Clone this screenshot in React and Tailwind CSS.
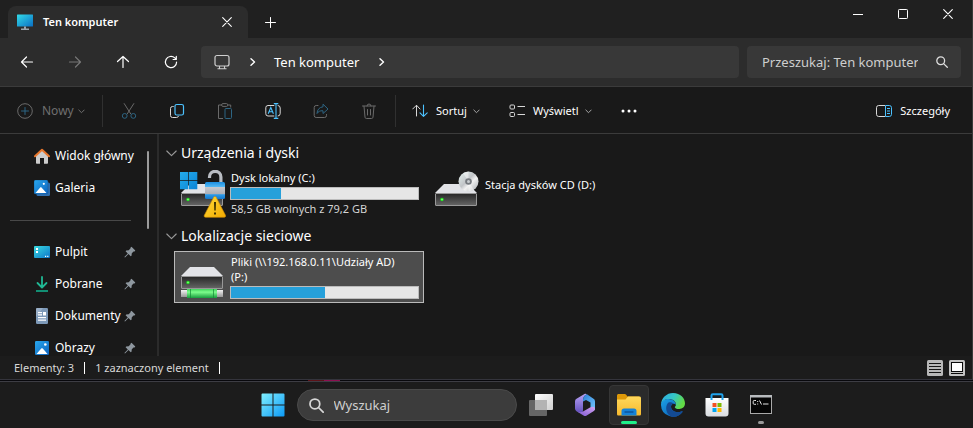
import React, { useId } from "react";

function Svg({ w = 16, h = w, box, children, ...rest }) {
  return (
    <svg width={w} height={h} viewBox={box || `0 0 ${w} ${h}`} fill="none" aria-hidden="true" className="block shrink-0" {...rest}>
      {children}
    </svg>
  );
}

const line = { stroke: "currentColor", strokeLinecap: "round", strokeLinejoin: "round" };

/* ---------- window and navigation glyphs ---------- */

const BackIcon = () => (
  <Svg w={14}><path {...line} strokeWidth="1.2" d="M12.5 7H1.5M6.5 2 1.5 7l5 5" /></Svg>
);
const ForwardIcon = () => (
  <Svg w={14}><path {...line} strokeWidth="1.2" d="M1.5 7h11M7.5 2l5 5-5 5" /></Svg>
);
const UpIcon = () => (
  <Svg w={14}><path {...line} strokeWidth="1.2" d="M7 12.5V1.5M1.5 6.5 7 1.5l5.500 5" /></Svg>
);
const RefreshIcon = () => (
  <Svg w={14}>
    <path {...line} strokeWidth="1.2" d="M12.600 7A5.600 5.600 0 1 1 10.800 2.900L12 4.200M12.300 1.300v3.200H9.100" />
  </Svg>
);
const CrossIcon = ({ size = 10 }) => (
  <Svg w={size} box="0 0 10 10"><path {...line} strokeWidth="1.1" d="m.7.7 8.600 8.600M9.300.7.7 9.300" /></Svg>
);
const PlusIcon = () => (
  <Svg w={11}><path {...line} strokeWidth="1" d="M5.500.5v10M.5 5.500h10" /></Svg>
);
const ChevronRight = () => (
  <Svg w={6} h={8}><path {...line} strokeWidth="1.4" d="m1 .8 3.500 3.200L1 7.200" /></Svg>
);
const ChevronDown = () => (
  <Svg w={7} h={5}><path {...line} strokeWidth="1" d="m.8 1 2.700 2.700L6.200 1" /></Svg>
);
const GroupChevron = () => (
  <Svg w={11} h={7}><path {...line} strokeWidth="1.1" d="m.8 1 4.700 4.700L10.200 1" /></Svg>
);
const MonitorLineIcon = () => (
  <Svg w={16}>
    <rect x="1" y="1.500" width="14" height="10.500" rx="2" stroke="#cfcfcf" strokeWidth="1.200" />
    <path stroke="#cfcfcf" strokeWidth="1.100" d="M5.500 12v2.500M10.500 12v2.500M3.500 14.700h9" />
  </Svg>
);
const MagnifierIcon = ({ size = 12, weight = 1.3 }) => (
  <Svg w={size} box="0 0 12 12">
    <circle cx="4.700" cy="4.700" r="3.900" {...line} strokeWidth={weight} />
    <path {...line} strokeWidth={weight} d="m7.600 7.600 3.700 3.700" />
  </Svg>
);

/* ---------- command bar glyphs ---------- */

const NewIcon = () => (
  <Svg w={16}>
    <circle cx="8" cy="8" r="7.300" stroke="#6a6a6a" />
    <path stroke="#2d6583" strokeLinecap="round" d="M8 4.500v7M4.500 8h7" />
  </Svg>
);
const CutIcon = () => (
  <Svg w={16}>
    <path stroke="#6a6a6a" strokeLinecap="round" d="m3.200.6 6.500 10.200M12.800.6 6.300 10.800" />
    <circle cx="3.700" cy="12.900" r="2.400" stroke="#2d6583" />
    <circle cx="12.300" cy="12.900" r="2.400" stroke="#2d6583" />
  </Svg>
);
const CopyIcon = () => (
  <Svg w={16}>
    <path stroke="#d8d8d8" strokeLinecap="round" d="M4.300 3.500h-.8a2 2 0 0 0-2 2v7a2 2 0 0 0 2 2h4a2 2 0 0 0 2-1.300" />
    <rect x="6" y="1.500" width="8.500" height="10.500" rx="1.800" stroke="#4cc2ff" strokeWidth="1.200" />
  </Svg>
);
const PasteIcon = () => (
  <Svg w={16}>
    <path stroke="#6a6a6a" d="M5 2H1.500v13.500H6M10.500 2h3.200v2.500" />
    <rect x="4.700" y=".6" width="6" height="2.800" rx="1.200" stroke="#6a6a6a" />
    <rect x="8" y="5.500" width="6.500" height="10" rx="1" stroke="#2d6583" />
  </Svg>
);
const RenameIcon = () => (
  <Svg w={16}>
    <path stroke="#d8d8d8" d="M9.300 2.500H3a2.200 2.200 0 0 0-2.200 2.200v6A2.200 2.200 0 0 0 3 13h6.300M12.700 2.500a2.500 2.500 0 0 1 2.500 2.500v5.500a2.500 2.500 0 0 1-2.500 2.500" />
    <path stroke="#4cc2ff" strokeWidth="1.100" d="m3.200 10.800 2.600-6.300 2.600 6.300M4.100 8.700h3.500M8.800.6h4.500M11 .6v14.800M8.800 15.400h4.500" />
  </Svg>
);
const ShareIcon = () => (
  <Svg w={16}>
    <path stroke="#6a6a6a" strokeLinecap="round" d="M5 2.500H3.200a2 2 0 0 0-2 2v8a2 2 0 0 0 2 2h8.300a2 2 0 0 0 2-2v-1" />
    <path stroke="#2d6583" strokeLinejoin="round" d="M10 1.200 15 6l-5 4.500V7.800C7 7.500 5.300 8.500 4 10.500c.2-3.800 2.300-6.300 6-6.700V1.200Z" />
  </Svg>
);
const TrashIcon = () => (
  <Svg w={16}>
    <path stroke="#6a6a6a" strokeLinecap="round" d="M1.500 3h13M3 3.200l1 11c.1.800.6 1.300 1.300 1.300h5.400c.7 0 1.200-.5 1.300-1.300l1-11M6 3a2 2 0 0 1 4 0M6.500 6.500v5.500M9.500 6.500v5.500" />
  </Svg>
);
const SortIcon = () => (
  <Svg w={16}>
    <path stroke="#d8d8d8" strokeLinecap="round" strokeLinejoin="round" d="M4.500 13V2.500M.7 6l3.800-3.800L8 6" />
    <path stroke="#4cc2ff" strokeWidth="1.100" strokeLinecap="round" strokeLinejoin="round" d="M11.500 2v11.200M8 9.800l3.500 3.500L15.200 9.800" />
  </Svg>
);
const ViewIcon = () => (
  <Svg w={16}>
    <rect x="1" y="2" width="4.500" height="4" rx="1" stroke="#d8d8d8" />
    <rect x="1" y="9.500" width="4.500" height="4" rx="1" stroke="#d8d8d8" />
    <path stroke="#d8d8d8" d="M8.500 3.500H16M8.500 11.500H16" />
  </Svg>
);
const DetailsIcon = () => (
  <Svg w={16}>
    <path stroke="#d8d8d8" d="M9 2.500H2.700A2.200 2.200 0 0 0 .5 4.700v6.600a2.200 2.200 0 0 0 2.200 2.200H9" />
    <path stroke="#4cc2ff" d="M9.500 2.500h3.800a2.200 2.200 0 0 1 2.200 2.200v6.600a2.200 2.200 0 0 1-2.200 2.200H9.500zM11 5.500h3M11 8h3M11 10.500h3" />
  </Svg>
);

/* ---------- coloured sidebar glyphs ---------- */

function PcIcon() {
  const id = useId();
  return (
    <Svg w={16}>
      <defs><linearGradient id={id} x1="0" y1="0" x2="1" y2="1"><stop stopColor="#33dbe8" /><stop offset="1" stopColor="#0a6fc4" /></linearGradient></defs>
      <rect y=".5" width="16" height="12" rx=".5" fill={`url(#${id})`} />
      <path fill="#9aa4ac" d="M7 12.500h2v2h3V16H4v-1.500h3z" />
    </Svg>
  );
}
const HomeIcon = () => (
  <Svg w={16}>
    <path fill="#cdcdcd" d="M2 7.500 8 2.300l6 5.200V15a.8.8 0 0 1-.8.800H10V10H6v5.800H2.800A.8.800 0 0 1 2 15z" />
    <path stroke="#e8762c" strokeWidth="2" strokeLinecap="round" strokeLinejoin="round" d="M1 8.300 8 1.700l7 6.600" />
  </Svg>
);
function GalleryIcon() {
  const id = useId();
  return (
    <Svg w={16}>
      <defs><linearGradient id={id} x1="0" y1="0" x2="1" y2="1"><stop stopColor="#29a8ee" /><stop offset="1" stopColor="#0c62bd" /></linearGradient></defs>
      <rect x="2.500" y="2.500" width="13.500" height="13.500" rx="1.500" fill="#2f6fb0" />
      <rect width="14" height="14" rx="1.500" fill={`url(#${id})`} stroke="#174f86" strokeWidth=".4" />
      <path fill="#fff" d="M1.500 13 6 7.700c.5-.6 1.200-.6 1.700 0l4.800 5.300z" />
      <circle cx="9.800" cy="3.800" r="1.100" fill="#fff" />
    </Svg>
  );
}
function DesktopIcon() {
  const id = useId();
  return (
    <Svg w={16}>
      <defs><linearGradient id={id} x1="0" y1="0" x2="1" y2="1"><stop stopColor="#3adbe0" /><stop offset="1" stopColor="#0c75c9" /></linearGradient></defs>
      <rect y="2" width="16" height="12" rx="1" fill={`url(#${id})`} />
      <path fill="#fff" d="M2 4h2v2H2zM2 7h2v2H2zM11 11.800h1.200v1.200H11zM13.200 11.800h1.200v1.200h-1.200z" />
    </Svg>
  );
}
function DownloadIcon() {
  return (
    <Svg w={16}>
      <path stroke="#20b894" strokeWidth="1.800" strokeLinecap="round" strokeLinejoin="round" d="M8 1v10M3.500 7 8 11.500 12.500 7" />
      <path stroke="#12a585" strokeWidth="1.700" d="M2 15h12" />
    </Svg>
  );
}
const DocumentIcon = () => (
  <Svg w={16}>
    <rect x="2" width="12" height="16" rx="1.200" fill="#7d99b8" />
    <path fill="#b5c6d8" d="M3 0h6L2 9V1a1 1 0 0 1 1-1" opacity=".5" />
    <path fill="#fff" d="M4 4h4v1.200H4zM4 6.200h4v1.200H4zM9 4h3v3.400H9zM4 9h8v1.200H4zM4 11.500h8v1.200H4z" />
  </Svg>
);
function PicturesIcon() {
  const id = useId();
  return (
    <Svg w={16}>
      <defs><linearGradient id={id} x1="0" y1="0" x2="1" y2="1"><stop stopColor="#29a8ee" /><stop offset="1" stopColor="#0c62bd" /></linearGradient></defs>
      <rect x="1" y="1" width="14" height="14" rx="1.200" fill={`url(#${id})`} />
      <path fill="#fff" d="M2.500 14 7 8.700c.6-.6 1.400-.6 2 0l4.500 5.300z" />
      <circle cx="11.300" cy="4.500" r="1.300" fill="#fff" />
    </Svg>
  );
}
const PinIcon = () => (
  <Svg w={12}>
    <path fill="#8e979f" d="M7.500.8 11.300 4.500 10.600 5.400 9.500 5.500 7.800 7.200 7.500 9.700 6.700 10.300 4.500 8.100 1 11.500.4 11 3.800 7.400 1.600 5.200 2.200 4.500 4.700 4.200 6.400 2.500 6.600 1.400z" />
  </Svg>
);

/* ---------- drive artwork ---------- */

function DriveBody({ y = 0 }) {
  const id = useId();
  return (
    <g transform={`translate(0 ${y})`}>
      <defs><linearGradient id={id} x1="0" y1="0" x2="0" y2="1"><stop stopColor="#262626" /><stop offset="1" stopColor="#666" /></linearGradient></defs>
      <path fill="#e2e3e7" d="M10 0h24l9 9H1z" />
      <rect x="1.500" y="9.500" width="41" height="12" rx=".5" fill={`url(#${id})`} stroke="#989898" />
      <circle cx="8" cy="15.500" r="1.700" fill="#1fe51f" />
      <circle cx="8" cy="15.500" r=".7" fill="#a9ffa0" />
    </g>
  );
}
function SystemDriveIcon() {
  const id = useId();
  return (
    <Svg w={46} h={48}>
      <defs>
        <linearGradient id={`${id}b`} x1="0" y1="0" x2="0" y2="1"><stop stopColor="#1c8ee0" /><stop offset=".28" stopColor="#53b8f3" /><stop offset=".3" stopColor="#c7c9ce" /><stop offset=".72" stopColor="#a9adb5" /><stop offset=".74" stopColor="#2a9bea" /><stop offset="1" stopColor="#1677c9" /></linearGradient>
        <linearGradient id={`${id}w`} x1="0" y1="0" x2="1" y2="1"><stop stopColor="#ffdc39" /><stop offset="1" stopColor="#f2a900" /></linearGradient>
        <linearGradient id={`${id}f`} x1="0" y1="0" x2="1" y2="1"><stop stopColor="#24acec" /><stop offset="1" stopColor="#0b84d6" /></linearGradient>
      </defs>
      <DriveBody y={14} />
      <path fill={`url(#${id}f)`} d="M0 2h8.300v8.300H0zM9 2h8.300v8.300H9zM0 11h8.300v8.300H0zM9 11h8.300v8.300H9z" />
      <path stroke="#b9bdc3" strokeWidth="3.200" d="M29.500 8V7a5.700 5.700 0 0 1 11.400 0v5" strokeLinecap="butt" />
      <rect x="25" y="12" width="20" height="17" rx="1.500" fill={`url(#${id}b)`} />
      <path fill={`url(#${id}w)`} stroke="#cf8a00" strokeWidth=".6" strokeLinejoin="round" d="M33.700 27.300c.6-1.100 1.900-1.100 2.500 0l9.300 18c.5 1-.1 2-1.200 2H25.500c-1.100 0-1.700-1-1.200-2z" />
      <path fill="#3a2f00" d="M34 32h2l-.3 8.500h-1.400zM34 42.500h2v2h-2z" />
    </Svg>
  );
}
function CdDriveIcon() {
  const id = useId();
  return (
    <Svg w={46} h={36}>
      <defs><linearGradient id={id} x1="0" y1="0" x2="1" y2="1"><stop stopColor="#e6f3f0" /><stop offset=".45" stopColor="#c2c5c8" /><stop offset=".6" stopColor="#f2f2f2" /><stop offset="1" stopColor="#a7acb0" /></linearGradient></defs>
      <DriveBody y={13} />
      <circle cx="34.500" cy="10.500" r="10" fill={`url(#${id})`} />
      <path fill="#fff" opacity=".45" d="M34.500 10.500 29 2l5.500-1.500zM34.500 10.500 40 19l-5.500 1.500z" />
      <circle cx="34.500" cy="10.500" r="3.300" fill="#777b80" />
      <circle cx="34.500" cy="10.500" r="1.500" fill="#c9cdd0" />
    </Svg>
  );
}
function NetworkDriveIcon() {
  const id = useId();
  return (
    <Svg w={46} h={32}>
      <defs>
        <linearGradient id={`${id}g`} x1="0" y1="0" x2="0" y2="1"><stop stopColor="#3fd35b" /><stop offset=".35" stopColor="#7dfd8c" /><stop offset="1" stopColor="#179b3e" /></linearGradient>
        <linearGradient id={`${id}s`} x1="0" y1="0" x2="0" y2="1"><stop stopColor="#f2f2f2" /><stop offset="1" stopColor="#999" /></linearGradient>
      </defs>
      <DriveBody y={0} />
      <rect x="1" y="23" width="42" height="7" fill={`url(#${id}s)`} />
      <rect x="7" y="22" width="30" height="9" fill={`url(#${id}g)`} />
      <path stroke="#128a35" strokeWidth=".7" d="M10.500 22v9M33.500 22v9" />
    </Svg>
  );
}

/* ---------- taskbar artwork ---------- */

function StartIcon() {
  const id = useId();
  return (
    <Svg w={24}>
      <defs><linearGradient id={id} gradientUnits="userSpaceOnUse" x1="0" y1="0" x2="24" y2="24"><stop stopColor="#83f2ff" /><stop offset="1" stopColor="#0a98f6" /></linearGradient></defs>
      <path fill={`url(#${id})`} d="M1.500.5h10v11h-11v-10a1 1 0 0 1 1-1M12.500.5h10a1 1 0 0 1 1 1v10h-11zM.5 12.500h11v11h-10a1 1 0 0 1-1-1zM12.500 12.500h11v10a1 1 0 0 1-1 1h-10z" />
    </Svg>
  );
}
function TaskViewIcon() {
  const id = useId();
  return (
    <Svg w={24}>
      <defs><linearGradient id={id} x1="0" y1="0" x2="1" y2="1"><stop stopColor="#fff" /><stop offset="1" stopColor="#cfcfcf" /></linearGradient></defs>
      <rect x="6" y="1" width="18" height="16" rx="1" fill={`url(#${id})`} />
      <rect y="7" width="18" height="16" rx="1" fill="#737373" opacity=".85" />
      <path fill="#b3b3b3" d="M6 7h12v10H6z" />
    </Svg>
  );
}
function M365Icon() {
  const id = useId();
  return (
    <Svg w={24}>
      <defs>
        <linearGradient id={`${id}a`} x1="0" y1="0" x2="0" y2="1"><stop stopColor="#b9a3f5" /><stop offset="1" stopColor="#6250bd" /></linearGradient>
        <linearGradient id={`${id}b`} x1="0" y1="0" x2="1" y2="1"><stop stopColor="#2e7fd6" /><stop offset="1" stopColor="#73c9ff" /></linearGradient>
        <linearGradient id={`${id}c`} x1="0" y1="1" x2="1" y2="0"><stop stopColor="#7a55ce" /><stop offset="1" stopColor="#d5a4f2" /></linearGradient>
      </defs>
      <path fill={`url(#${id}a)`} d="M11.500 1 3.500 5.800A3 3 0 0 0 2 8.400v7.200a3 3 0 0 0 1.500 2.600l3 1.500c2 .8 3.500-.2 3.500-2.700V7.500C10 4.500 11 2.500 14 1.300 13.200.7 12.300.6 11.500 1" />
      <path fill={`url(#${id}b)`} d="M14 1.200c-3 1-4 3.300-4 6.300v1l3-1.500 4.500 2.500v6l4.300 1.800c.2-.5.2-1 .2-1.700V8.400a3 3 0 0 0-1.500-2.600z" />
      <path fill={`url(#${id}c)`} d="m3.500 18.300 7 4.200a3 3 0 0 0 3.200 0l6.800-4.200c1.500-1 1.500-2.300 1.300-3.300-1-1.500-3-1.500-4.800-.4L10.500 18.200c-2.200 1.400-4.700 1.200-7 .1" />
    </Svg>
  );
}
function FolderIcon() {
  const id = useId();
  return (
    <Svg w={24}>
      <defs><linearGradient id={id} x1="0" y1="0" x2="0" y2="1"><stop stopColor="#ffd95c" /><stop offset="1" stopColor="#f6b92e" /></linearGradient></defs>
      <path fill="#dd9808" d="M0 2.500C0 1.700.7 1 1.500 1h6.200c.5 0 1 .2 1.300.6L10.500 3.500H22V8H0z" />
      <path fill={`url(#${id})`} d="M0 6.500h8.500L11 3.500h11.500c.8 0 1.500.7 1.500 1.500v16c0 1-.7 1.500-1.500 1.500h-21C.7 22.500 0 22 0 21z" />
      <path fill="#1683d8" d="M4.500 22.500V18a2.500 2.500 0 0 1 2.500-2.500h10a2.500 2.500 0 0 1 2.500 2.500v4.500z" />
      <path stroke="#0c559c" strokeWidth="1.300" strokeLinecap="round" d="M8 19h8" />
    </Svg>
  );
}
function EdgeIcon() {
  const id = useId();
  return (
    <Svg w={24}>
      <defs>
        <linearGradient id={`${id}a`} x1="0" y1="0" x2="1" y2=".4"><stop stopColor="#2ba9e8" /><stop offset=".55" stopColor="#36c8c5" /><stop offset="1" stopColor="#62da45" /></linearGradient>
        <linearGradient id={`${id}b`} x1="0" y1="0" x2="1" y2="1"><stop stopColor="#1ba0e6" /><stop offset="1" stopColor="#0b58ae" /></linearGradient>
      </defs>
      <path fill={`url(#${id}b)`} d="M0 11.500C.5 7.500 4 6 7.500 6c5 0 7.500 3.200 7.500 6-1.500-2-5-1.500-5 1.800 0 4.200 5.500 6.700 10.800 4.400.6-.2 1 .2.7.8A12 12 0 0 1 0 12z" />
      <path fill="#134a93" d="M7.500 9.500C4 12.500 4 20.500 11 24c4.200.3 8-1.500 10.500-5 .3-.5-.1-1-.7-.8C15.500 20.500 10 18 10 13.800c0-1.800 1.200-3 2.500-3.300-1.500-1.300-3.300-1.600-5-1" />
      <path fill={`url(#${id}a)`} d="M0 11.500A12 12 0 0 1 12 0c7.500 0 12 5.300 12 10.300 0 3.600-2.600 5.700-5.700 5.700-3 0-4.500-1-4.500-1.800 0-.6 1.200-.9 1.200-2.700C15 8.500 12.300 6 8 6 4 6 1 8 0 11.500" />
    </Svg>
  );
}
function StoreIcon() {
  const id = useId();
  return (
    <Svg w={24}>
      <defs><linearGradient id={id} x1="0" y1="0" x2="0" y2="1"><stop stopColor="#fff" /><stop offset="1" stopColor="#d9dce0" /></linearGradient></defs>
      <path fill={`url(#${id})`} d="M.5 5h23v15.500a3 3 0 0 1-3 3h-17a3 3 0 0 1-3-3z" />
      <path stroke="#20a4ee" strokeWidth="2" d="M6.500 7V2.500c0-.8.5-1.300 1.300-1.300h8.400c.8 0 1.300.5 1.300 1.300V7" />
      <path fill="#f25022" d="M7.500 10h4v4h-4z" />
      <path fill="#7fba00" d="M12.500 10h4v4h-4z" />
      <path fill="#00a4ef" d="M7.500 15h4v4h-4z" />
      <path fill="#ffb900" d="M12.500 15h4v4h-4z" />
    </Svg>
  );
}
const TerminalIcon = () => (
  <Svg w={24}>
    <rect x="1.500" y="2.500" width="21" height="18" fill="#050505" stroke="#a9a9a9" />
    <path fill="#b8bbbe" d="M1 2h22v2.500H1z" />
    <path stroke="#e4e4e4" d="M7 7.500H5.200a1 1 0 0 0-1 1v1.800a1 1 0 0 0 1 1H7M8.700 8v1M8.700 10.500v1M10.500 7.500l2 4M14 11h5.500" />
  </Svg>
);
const ListViewIcon = () => (
  <Svg w={16}>
    <rect width="16" height="16" rx="1.500" fill="#b8b8b8" />
    <path stroke="#151515" d="M2 3.500h12M2 6.500h12M2 9.500h12M2 12.500h12" />
  </Svg>
);
const TileViewIcon = () => (
  <Svg w={16}>
    <rect width="16" height="16" rx="1.500" fill="#c4c4c4" />
    <rect x="2.500" y="2.500" width="11" height="9" fill="#fff" stroke="#0b0b0b" />
    <path stroke="#0b0b0b" d="M2 13.500h12" />
  </Svg>
);

/* ---------- building blocks ---------- */

const NavButton = ({ label, muted, children }) => (
  <button type="button" aria-label={label} disabled={muted} className={`flex h-8 w-12 items-center justify-center ${muted ? "text-[#777]" : "text-white"}`}>
    {children}
  </button>
);

const ToolButton = ({ label, disabled, children }) => (
  <button type="button" aria-label={label} disabled={disabled} className="flex h-8 w-12 items-center justify-center">
    {children}
  </button>
);

const Divider = () => <div className="h-8 w-px bg-[#303030]" />;

const SideItem = ({ icon, label, pinned }) => (
  <li>
    <a href="#" className="flex h-8 items-center pl-[34px] text-[12px]">
      {icon}
      <span className="ml-[5px] flex-1 whitespace-nowrap">{label}</span>
      {pinned && <span className="mr-[11px]"><PinIcon /></span>}
    </a>
  </li>
);

const UsageBar = ({ label, value }) => (
  <div role="progressbar" aria-label={label} aria-valuenow={value} aria-valuemin={0} aria-valuemax={100} className="h-[13px] border border-[#bcbcbc] bg-[#e6e6e6]">
    <div className="h-full bg-[#26a0da]" style={{ width: `${value}%` }} />
  </div>
);

const GroupHeading = ({ children }) => (
  <h2 className="text-[14px] leading-5">
    <button type="button" className="flex h-5 items-center gap-1 text-white">
      <span className="text-[#9a9a9a]"><GroupChevron /></span>
      {children}
    </button>
  </h2>
);

const TaskButton = ({ label, active, mark, children }) => (
  <button
    type="button"
    aria-label={label}
    className={`relative flex size-10 items-center justify-center rounded border ${active ? "border-[#363636] bg-[#2b2b2b]" : "border-transparent"}`}
  >
    {children}
    {mark && <span className={`absolute bottom-0 h-[3px] rounded-full ${active ? "w-4 bg-[#1fef8a]" : "w-[6px] bg-[#9a9a9a]"}`} />}
  </button>
);

/* ---------- page ---------- */

function TitleBar() {
  return (
    <div className="flex h-[38px] shrink-0 items-end bg-[#202020] pl-2">
      <div className="flex h-8 w-60 items-center rounded-t-lg bg-[#2c2c2c] pl-[9px] pr-4">
        <PcIcon />
        <span className="ml-[10px] flex-1 font-semibold">Ten komputer</span>
        <button type="button" aria-label="Zamknij kartę"><CrossIcon size={10} /></button>
      </div>
      <button type="button" aria-label="Nowa karta" className="flex h-8 w-11 items-center justify-center"><PlusIcon /></button>
      <div className="ml-auto flex self-start pr-[2px]">
        <button type="button" aria-label="Minimalizuj" className="flex h-[27px] w-[45px] items-center justify-center">
          <Svg w={10}><path stroke="#fff" d="M0 5.500h10" /></Svg>
        </button>
        <button type="button" aria-label="Maksymalizuj" className="flex h-[27px] w-[45px] items-center justify-center">
          <Svg w={10}><rect x=".5" y=".5" width="9" height="9" rx=".8" stroke="#fff" /></Svg>
        </button>
        <button type="button" aria-label="Zamknij" className="flex h-[27px] w-[45px] items-center justify-center"><CrossIcon /></button>
      </div>
    </div>
  );
}

function AddressRow() {
  return (
    <div className="flex h-12 shrink-0 items-center bg-[#2c2c2c] pl-[3px] pr-[11px]">
      <NavButton label="Wstecz"><BackIcon /></NavButton>
      <NavButton label="Dalej" muted><ForwardIcon /></NavButton>
      <NavButton label="W górę"><UpIcon /></NavButton>
      <NavButton label="Odśwież"><RefreshIcon /></NavButton>
      <nav aria-label="Pasek adresu" className="ml-[6px] flex h-8 flex-1 items-center rounded bg-[#383838] pl-[13px] text-[13px]">
        <MonitorLineIcon />
        <span className="ml-5"><ChevronRight /></span>
        <a href="#" className="ml-[18px] whitespace-nowrap">Ten komputer</a>
        <span className="ml-5"><ChevronRight /></span>
      </nav>
      <div className="ml-2 flex h-8 w-[214px] items-center rounded bg-[#383838] pl-[15px] pr-[13px]">
        <input type="text" aria-label="Przeszukaj: Ten komputer" placeholder="Przeszukaj: Ten komputer" className="w-[156px] bg-transparent text-[13px] text-white outline-none placeholder:text-[#cecece]" />
        <span className="ml-auto text-[#dedede]"><MagnifierIcon /></span>
      </div>
    </div>
  );
}

function CommandBar() {
  return (
    <div className="flex h-12 shrink-0 items-center border-y border-[#3b3b3b] bg-[#191919] pl-[17px] pr-[22px] pt-[2px]">
      <button type="button" disabled className="flex h-8 w-[85px] items-center text-[12px] text-[#6f6f6f]">
        <NewIcon />
        <span className="ml-[9px] w-[36px] text-left">Nowy</span>
        <ChevronDown />
      </button>
      <Divider />
      <div className="flex px-[2px]">
        <ToolButton label="Wytnij" disabled><CutIcon /></ToolButton>
        <ToolButton label="Kopiuj"><CopyIcon /></ToolButton>
        <ToolButton label="Wklej" disabled><PasteIcon /></ToolButton>
        <ToolButton label="Zmień nazwę"><RenameIcon /></ToolButton>
        <ToolButton label="Udostępnij" disabled><ShareIcon /></ToolButton>
        <ToolButton label="Usuń" disabled><TrashIcon /></ToolButton>
      </div>
      <Divider />
      <button type="button" className="ml-4 flex h-8 w-[97px] items-center">
        <SortIcon />
        <span className="ml-2 w-[37px] text-left">Sortuj</span>
        <span className="text-[#a5a5a5]"><ChevronDown /></span>
      </button>
      <button type="button" className="flex h-8 w-[104px] items-center">
        <ViewIcon />
        <span className="ml-2 w-[52px] whitespace-nowrap text-left">Wyświetl</span>
        <span className="text-[#a5a5a5]"><ChevronDown /></span>
      </button>
      <button type="button" aria-label="Zobacz więcej" className="flex h-8 w-8 items-center justify-center">
        <Svg w={18} h={4}><circle cx="3" cy="2" r="1.500" fill="#fff" /><circle cx="9" cy="2" r="1.500" fill="#fff" /><circle cx="15" cy="2" r="1.500" fill="#fff" /></Svg>
      </button>
      <button type="button" className="ml-auto flex h-8 items-center gap-2">
        <DetailsIcon />
        Szczegóły
      </button>
    </div>
  );
}

function Sidebar() {
  return (
    <aside className="flex w-[159px] shrink-0 border-r-2 border-[#2b2b2b] pt-[6px]">
      <nav aria-label="Okienko nawigacji" className="min-w-0 flex-1">
        <ul>
          <SideItem icon={<HomeIcon />} label="Widok główny" />
          <SideItem icon={<GalleryIcon />} label="Galeria" />
          <li className="flex h-8 items-center pl-[10px] pr-4" role="separator"><span className="h-px flex-1 bg-[#484848]" /></li>
          <SideItem icon={<DesktopIcon />} label="Pulpit" pinned />
          <SideItem icon={<DownloadIcon />} label="Pobrane" pinned />
          <SideItem icon={<DocumentIcon />} label="Dokumenty" pinned />
          <SideItem icon={<PicturesIcon />} label="Obrazy" pinned />
        </ul>
      </nav>
      <div className="mr-2 mt-[11px] h-[78px] w-[2px] rounded-full bg-[#9b9b9b]" />
    </aside>
  );
}

function Drives() {
  return (
    <main className="min-w-0 flex-1 pl-[7px] pt-[9px]">
      <GroupHeading>Urządzenia i dyski</GroupHeading>
      <div className="ml-2 mt-[5px] flex h-[52px] gap-1">
        <button type="button" className="flex w-[250px] pl-[6px] text-left">
          <span className="pt-[2px]"><SystemDriveIcon /></span>
          <span className="ml-1 block w-[189px]">
            <span className="block h-[19px] pl-[1px] pt-[2px] leading-4">Dysk lokalny (C:)</span>
            <UsageBar label="Zajęte miejsce na dysku C" value={26.5} />
            <span className="block pl-[1px] pt-[1px] leading-4 text-[#d5d5d5]">58,5 GB wolnych z 79,2 GB</span>
          </span>
        </button>
        <button type="button" className="flex w-[250px] pl-[6px] pt-[3px] text-left">
          <CdDriveIcon />
          <span className="ml-[5px] pt-[6px] leading-4">Stacja dysków CD (D:)</span>
        </button>
      </div>
      <div className="mt-[6px]">
        <GroupHeading>Lokalizacje sieciowe</GroupHeading>
      </div>
      <button type="button" aria-pressed="true" className="ml-2 mt-[5px] flex h-[52px] w-[250px] border border-[#bababa] bg-[#4d4d4d] pl-[5px] text-left">
        <span className="pt-[15px]"><NetworkDriveIcon /></span>
        <span className="ml-1 block w-[189px] pt-[2px]">
          <span className="block h-8 pl-[1px] leading-[15px]">Pliki (\\192.168.0.11\Udziały AD)<br />(P:)</span>
          <UsageBar label="Zajęte miejsce na dysku P" value={50} />
        </span>
      </button>
    </main>
  );
}

function StatusBar() {
  return (
    <footer className="flex h-[23px] shrink-0 items-center bg-[#1c1c1c] pl-[14px] pr-[7px] text-[#d8d8d8]">
      <span>Elementy: 3</span>
      <span className="mx-[10px] h-3 w-px bg-white" />
      <span>1 zaznaczony element</span>
      <span className="mx-[10px] h-3 w-px bg-white" />
      <div className="ml-auto flex gap-[6px]">
        <button type="button" aria-label="Szczegóły"><ListViewIcon /></button>
        <button type="button" aria-label="Duże ikony"><TileViewIcon /></button>
      </div>
    </footer>
  );
}

function Taskbar() {
  return (
    <div className="flex h-[46px] shrink-0 items-center justify-center bg-[#1c1c1c]">
      <div className="flex items-center gap-1 pl-[60px]">
        <TaskButton label="Start"><StartIcon /></TaskButton>
        <div className="flex h-8 w-[220px] items-center rounded-full border border-[#4a4a4a] bg-[#3c3c3c] pl-[11px] text-[#d6d6d6]">
          <MagnifierIcon size={15} weight={1.4} />
          <input type="text" aria-label="Wyszukaj" placeholder="Wyszukaj" className="ml-[10px] w-40 bg-transparent text-[13px] outline-none placeholder:text-[#cfcfcf]" />
        </div>
        <TaskButton label="Widok zadań"><TaskViewIcon /></TaskButton>
        <TaskButton label="Microsoft 365"><M365Icon /></TaskButton>
        <TaskButton label="Eksplorator plików" active mark><FolderIcon /></TaskButton>
        <TaskButton label="Microsoft Edge"><EdgeIcon /></TaskButton>
        <TaskButton label="Microsoft Store"><StoreIcon /></TaskButton>
        <TaskButton label="Wiersz polecenia" mark><TerminalIcon /></TaskButton>
      </div>
    </div>
  );
}

export default function App() {
  return (
    <div className="flex h-screen flex-col overflow-hidden bg-[#191919] font-['Noto_Sans','Open_Sans',sans-serif] text-[11px] leading-4 text-white">
      <div className="flex min-h-0 flex-1 flex-col border-r border-[#3a3a3a]">
        <TitleBar />
        <AddressRow />
        <CommandBar />
        <div className="flex min-h-0 flex-1 overflow-hidden">
          <Sidebar />
          <Drives />
        </div>
        <StatusBar />
      </div>
      <div className="flex h-[3px] shrink-0 border-b border-t border-b-[#3d3d44] border-t-[#34343c] bg-[#08080c]">
        <span className="ml-[308px] h-px w-4 bg-[#5c1218]" />
        <span className="h-px w-4 bg-[#8c1050]" />
      </div>
      <Taskbar />
    </div>
  );
}
